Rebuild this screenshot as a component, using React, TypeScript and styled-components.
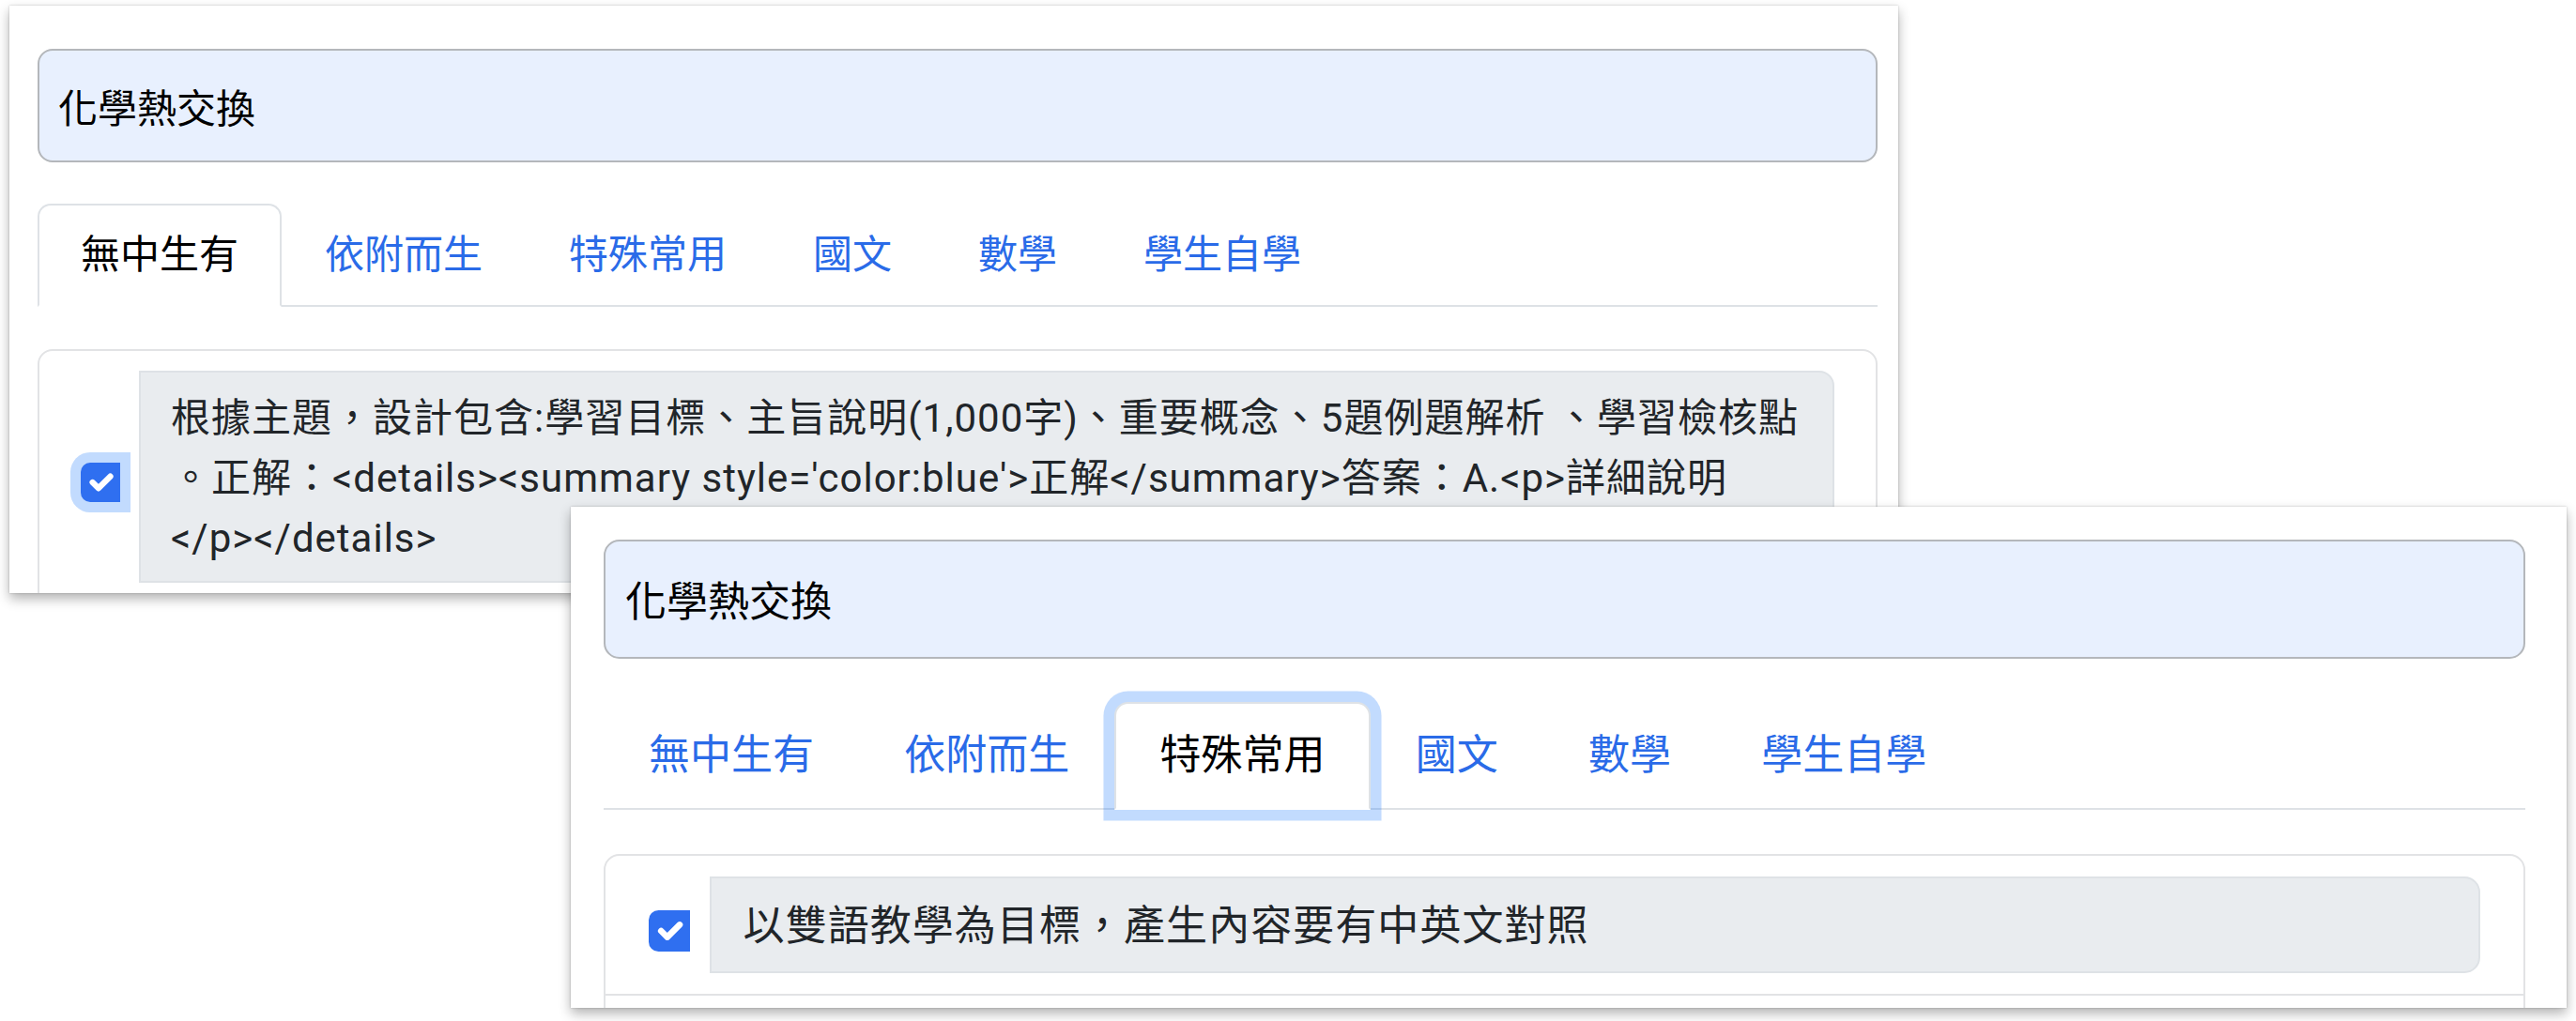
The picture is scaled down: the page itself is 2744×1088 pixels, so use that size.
import styled, { createGlobalStyle } from "styled-components";

const GlobalStyle = createGlobalStyle`
	html, body {
		margin: 0;
		padding: 0;
		background: #ffffff;
	}
	body {
		font-family: "Roboto", "Noto Sans CJK TC", sans-serif;
		color: #212529;
	}
`;

const Desktop = styled.div`
	position: relative;
	width: 2744px;
	height: 1088px;
	overflow: hidden;
	background: #ffffff;
`;

interface WindowFrame {
	$left: number;
	$top: number;
	$width: number;
	$height: number;
	$padding: string;
}

const Window = styled.section<WindowFrame>`
	position: absolute;
	left: ${(p) => p.$left}px;
	top: ${(p) => p.$top}px;
	width: ${(p) => p.$width}px;
	height: ${(p) => p.$height}px;
	box-sizing: border-box;
	padding: ${(p) => p.$padding};
	background: #ffffff;
	overflow: hidden;
	box-shadow: 0 0 2px rgba(0, 0, 0, 0.22), 0 6px 12px rgba(0, 0, 0, 0.3);
`;

const Content = styled.div<{ $zoom: number }>`
	zoom: ${(p) => p.$zoom};
	display: flex;
	flex-direction: column;
	font-size: 42px;
	line-height: 64px;
`;

const TopicField = styled.input`
	box-sizing: border-box;
	width: 100%;
	height: 121px;
	margin: 0;
	padding: 0 20px;
	border: 2px solid #b4b7bb;
	border-radius: 16px;
	background: #e8f0fe;
	font: inherit;
	color: #000000;
	outline: none;
`;

const TabList = styled.nav`
	display: flex;
	margin-top: 44px;
	border-bottom: 2px solid #dee2e6;
`;

const Tab = styled.button<{ $active?: boolean; $focused?: boolean }>`
	box-sizing: border-box;
	height: 110px;
	margin: 0 0 -2px;
	padding: 0 44px;
	border: 2px solid transparent;
	border-radius: 14px 14px 0 0;
	background: transparent;
	font: inherit;
	color: #2a6be8;
	cursor: pointer;

	${(p) =>
		p.$active &&
		`
		color: #000000;
		background: #ffffff;
		border-color: #dee2e6 #dee2e6 #ffffff;
	`}

	${(p) =>
		p.$focused &&
		`
		position: relative;
		box-shadow: 0 0 0 11px rgba(13, 110, 253, 0.25);
	`}
`;

const Card = styled.div`
	margin-top: 45px;
	border: 2px solid #e2e3e5;
	border-radius: 16px;
`;

const Row = styled.div`
	display: flex;
	align-items: center;
	gap: 20px;
	padding: 21px 44px;
	border-bottom: 2px solid #e2e3e5;
`;

const Check = styled.span<{ $focused?: boolean }>`
	flex: none;
	display: flex;
	align-items: center;
	justify-content: center;
	width: 42px;
	height: 42px;
	margin-top: 12px;
	border-radius: 10px 0 0 10px;
	background: #2f6ff0;
	box-shadow: ${(p) =>
		p.$focused ? "0 0 0 11px rgba(13, 110, 253, 0.25)" : "none"};
`;

const PromptBox = styled.div`
	flex: 1;
	box-sizing: border-box;
	padding: 17px 32px 13px;
	border: 2px solid #dee2e6;
	border-radius: 0 16px 16px 0;
	background: #e9ecef;
	color: #212529;
	letter-spacing: 1px;
	white-space: pre;
`;

const CheckMark = () => (
	<svg width="42" height="42" viewBox="0 0 20 20">
		<path
			d="m6 10 3 3 6-6"
			fill="none"
			stroke="#ffffff"
			strokeWidth="3"
			strokeLinecap="round"
			strokeLinejoin="round"
		/>
	</svg>
);

const tabs = ["無中生有", "依附而生", "特殊常用", "國文", "數學", "學生自學"];

interface PanelProps {
	zoom: number;
	activeTab: number;
	focusedTab?: boolean;
	focusedCheck?: boolean;
	lines: string[];
}

const Panel = ({ zoom, activeTab, focusedTab, focusedCheck, lines }: PanelProps) => {
	return (
		<Content $zoom={zoom}>
			<TopicField readOnly value="化學熱交換" />
			<TabList>
				{tabs.map((label, i) => (
					<Tab
						key={label}
						$active={i === activeTab}
						$focused={focusedTab && i === activeTab}
					>
						{label}
					</Tab>
				))}
			</TabList>
			<Card>
				<Row>
					<Check $focused={focusedCheck}>
						<CheckMark />
					</Check>
					<PromptBox>{lines.join("\n")}</PromptBox>
				</Row>
				<Row />
			</Card>
		</Content>
	);
};

export default function App() {
	return (
		<Desktop>
			<GlobalStyle />
			<Window $left={10} $top={6} $width={2012} $height={626} $padding="46px 22px 0 30px">
				<Panel
					zoom={1}
					activeTab={0}
					focusedCheck
					lines={[
						"根據主題，設計包含:學習目標、主旨說明(1,000字)、重要概念、5題例題解析 、學習檢核點",
						"。正解：<details><summary style='color:blue'>正解</summary>答案：A.<p>詳細說明",
						"</p></details>",
					]}
				/>
			</Window>
			<Window $left={608} $top={540} $width={2126} $height={534} $padding="35px 44px 0 35px">
				<Panel
					zoom={1.048}
					activeTab={2}
					focusedTab
					lines={["以雙語教學為目標，產生內容要有中英文對照"]}
				/>
			</Window>
		</Desktop>
	);
}
